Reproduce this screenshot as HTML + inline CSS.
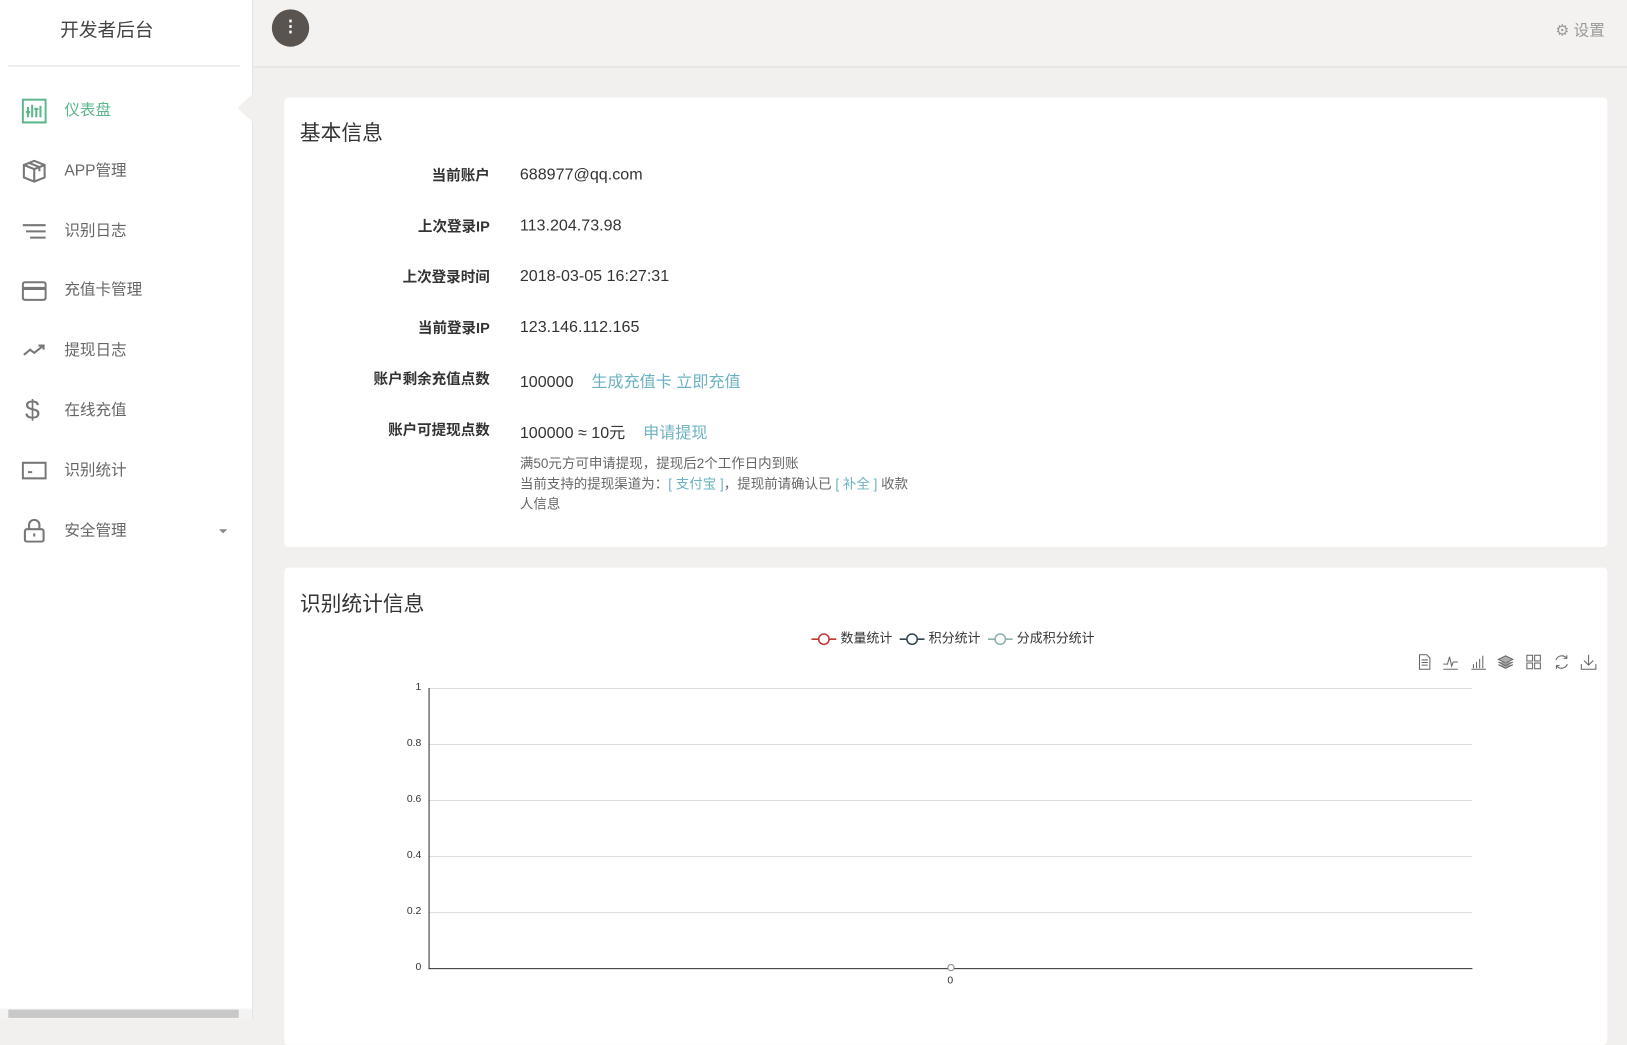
<!DOCTYPE html>
<html><head><meta charset="utf-8">
<style>
html,body{margin:0;padding:0;width:1627px;height:1019px;overflow:hidden;background:#f1f0ee;}
#w{position:absolute;left:0;top:0;width:1568px;height:982px;transform:scale(1.03763);transform-origin:0 0;font-family:"Liberation Sans","Noto Sans CJK SC",sans-serif;color:#333;}
.a{position:absolute;}
#side{left:0;top:0;width:243px;height:982px;background:#fff;border-right:1px solid #e2e0dd;}
.mi{position:absolute;left:62px;font-size:15px;color:#666;line-height:20px;}
.ic{position:absolute;left:21px;width:24px;height:24px;}
.card{background:#fff;border-radius:4px;}
.lb{position:absolute;right:1096px;font-weight:bold;font-size:14px;color:#333;text-align:right;white-space:nowrap;}
.v{position:absolute;left:501px;font-size:15.5px;color:#333;white-space:nowrap;}
.lk{color:#6cb2c2;}
.note{font-size:13px;color:#666;}
.yl{position:absolute;font-size:10px;color:#333;text-align:right;width:30px;left:376px;}
.gl{position:absolute;left:413px;width:1006px;height:1px;background:#ddd;}
.tb{position:absolute;top:630px;width:16px;height:16px;}
.lg{display:inline-block;vertical-align:middle;margin-right:4px}
</style></head><body><div id="w">
<div class="a" style="left:0;top:0;width:1568px;height:64px;background:#f3f2f0;border-bottom:1px solid #dcdad7"></div>
<div class="a" id="side">
 <div class="a" style="left:0;width:206px;top:15px;text-align:center;font-size:18px;color:#444">开发者后台</div>
 <div class="a" style="left:8px;top:63px;width:223px;height:1px;background:#ddd"></div>
 <svg class="ic" style="top:95px" viewBox="0 0 24 24"><rect x="1" y="1" width="22" height="22" fill="none" stroke="#5cb88a" stroke-width="2"/><path d="M6 18V8M10 18V6M14 18V10M18 18V7M4 13h4M12 10h4" stroke="#5cb88a" stroke-width="2" fill="none"/></svg>
 <div class="mi" style="top:97px;color:#5cb88a">仪表盘</div>
 <svg class="ic" style="top:153px" viewBox="0 0 24 24" fill="none" stroke="#777" stroke-width="2"><path d="M2 6l10-4 10 4v12l-10 4-10-4z M2 6l10 4 10-4 M12 10v12 M7 4l10 4v4"/></svg>
 <div class="mi" style="top:155px">APP管理</div>
 <svg class="ic" style="top:211px" viewBox="0 0 24 24" stroke="#777" stroke-width="2"><path d="M1 6h22M4 12h19M8 18h15"/></svg>
 <div class="mi" style="top:213px">识别日志</div>
 <svg class="ic" style="top:269px" viewBox="0 0 24 24" fill="none" stroke="#777" stroke-width="2"><rect x="1" y="3" width="22" height="17" rx="2"/><path d="M1 9h22" stroke-width="3"/></svg>
 <div class="mi" style="top:270px">充值卡管理</div>
 <svg class="ic" style="top:326px" viewBox="0 0 24 24" fill="none" stroke="#777" stroke-width="2"><path d="M2 16l6-5 4 3 9-7M16 7h5v4"/></svg>
 <div class="mi" style="top:328px">提现日志</div>
 <div class="a" style="left:24px;top:380px;font-size:26px;color:#777">$</div>
 <div class="mi" style="top:386px">在线充值</div>
 <svg class="ic" style="top:442px" viewBox="0 0 24 24" fill="none" stroke="#777" stroke-width="2"><rect x="1" y="4" width="22" height="15"/><path d="M6 13h4"/></svg>
 <div class="mi" style="top:444px">识别统计</div>
 <svg class="ic" style="top:499px" viewBox="0 0 24 24" fill="none" stroke="#777" stroke-width="2"><rect x="3" y="11" width="18" height="12" rx="2"/><path d="M7 11V7a5 5 0 0 1 10 0v4M12 15v3"/></svg>
 <div class="mi" style="top:502px">安全管理</div>
 <div class="a" style="left:211px;top:510px;border:4px solid transparent;border-top:4px solid #888;border-bottom:0"></div>
 <div class="a" style="left:0;top:972px;width:243px;height:10px;background:#f3f3f3"></div>
 <div class="a" style="left:8px;top:973px;width:222px;height:8px;background:#c8c8c8"></div>
</div>
<div class="a" style="left:229px;top:90px;width:0;height:0;border-top:14px solid transparent;border-bottom:14px solid transparent;border-right:15px solid #f1f0ee"></div>
<div class="a" style="left:262px;top:9px;width:36px;height:36px;border-radius:50%;background:#5a5450;color:#fff;text-align:center;font-size:16px;line-height:36px;font-weight:bold">⋮</div>
<div class="a" style="left:1499px;top:18px;font-size:15px;color:#999">⚙ 设置</div>

<div class="a card" style="left:274px;top:94px;width:1275px;height:433px"></div>
<div class="a" style="left:289px;top:112px;font-size:20px;color:#333">基本信息</div>
<div class="lb" style="top:159px">当前账户</div><div class="v" style="top:160px">688977@qq.com</div>
<div class="lb" style="top:208px">上次登录IP</div><div class="v" style="top:209px">113.204.73.98</div>
<div class="lb" style="top:257px">上次登录时间</div><div class="v" style="top:258px">2018-03-05 16:27:31</div>
<div class="lb" style="top:306px">当前登录IP</div><div class="v" style="top:307px">123.146.112.165</div>
<div class="lb" style="top:355px">账户剩余充值点数</div><div class="v" style="top:356px">100000 &nbsp;&nbsp;&nbsp;<span class="lk">生成充值卡 立即充值</span></div>
<div class="lb" style="top:404px">账户可提现点数</div><div class="v" style="top:405px">100000 ≈ 10元 &nbsp;&nbsp;&nbsp;<span class="lk">申请提现</span></div>
<div class="a note" style="left:501px;top:437px;width:400px;line-height:19.5px">满50元方可申请提现，提现后2个工作日内到账<br>当前支持的提现渠道为：<span class="lk">[ 支付宝 ]</span>，提现前请确认已 <span class="lk">[ 补全 ]</span> 收款<br>人信息</div>

<div class="a card" style="left:274px;top:547px;width:1275px;height:460px"></div>
<div class="a" style="left:289px;top:566px;font-size:20px;color:#333">识别统计信息</div>
<div class="a" style="left:782px;top:607px;font-size:12.5px;color:#333;white-space:nowrap;line-height:16px">
<svg class="lg" width="24" height="14"><path d="M0 7h24" stroke="#c23531" stroke-width="1.5"/><circle cx="12" cy="7" r="5" fill="#fff" stroke="#c23531" stroke-width="1.5"/></svg>数量统计 &nbsp;<svg class="lg" width="24" height="14"><path d="M0 7h24" stroke="#2f4554" stroke-width="1.5"/><circle cx="12" cy="7" r="5" fill="#fff" stroke="#2f4554" stroke-width="1.5"/></svg>积分统计 &nbsp;<svg class="lg" width="24" height="14"><path d="M0 7h24" stroke="#8fb0b0" stroke-width="1.5"/><circle cx="12" cy="7" r="5" fill="#fff" stroke="#8fb0b0" stroke-width="1.5"/></svg>分成积分统计</div>
<g></g>
<svg class="tb" style="left:1365px" viewBox="0 0 16 16" fill="none" stroke="#666"><path d="M3 1h7l3 3v11H3z M5 6h6M5 8.5h6M5 11h6"/></svg>
<svg class="tb" style="left:1390px" viewBox="0 0 16 16" fill="none" stroke="#666"><path d="M1 10h4l2-7 2 9 1.5-4H15M1 15h14"/></svg>
<svg class="tb" style="left:1417px" viewBox="0 0 16 16" fill="none" stroke="#666"><path d="M1 15h14M3 14V10M6 14V8M9 14V5M12 14V2"/></svg>
<svg class="tb" style="left:1443px" viewBox="0 0 16 16" fill="#777" stroke="#666"><path d="M8 2l7 3.5-7 3.5-7-3.5z M1 8l7 3.5 7-3.5 M1 10.5l7 3.5 7-3.5" fill-opacity=".6"/></svg>
<svg class="tb" style="left:1470px" viewBox="0 0 16 16" fill="none" stroke="#666"><rect x="1.5" y="1.5" width="5.5" height="5.5"/><rect x="9" y="1.5" width="5.5" height="5.5"/><rect x="1.5" y="9" width="5.5" height="5.5"/><rect x="9" y="9" width="5.5" height="5.5"/></svg>
<svg class="tb" style="left:1497px" viewBox="0 0 16 16" fill="none" stroke="#666"><path d="M2.5 6A6 6 0 0 1 13 4.5M13.5 10A6 6 0 0 1 3 11.5M13 1.5v3h-3M3 14.5v-3h3"/></svg>
<svg class="tb" style="left:1523px" viewBox="0 0 16 16" fill="none" stroke="#666"><path d="M8 1v10M3.5 6.5L8 11l4.5-4.5M1 10v5h14v-5"/></svg>
<div class="gl" style="top:663px"></div><div class="gl" style="top:717px"></div><div class="gl" style="top:771px"></div><div class="gl" style="top:825px"></div><div class="gl" style="top:879px"></div>
<div class="gl" style="top:933px;background:#333"></div>
<div class="a" style="left:413px;top:663px;width:1px;height:271px;background:#333"></div>
<div class="yl" style="top:657px">1</div><div class="yl" style="top:711px">0.8</div><div class="yl" style="top:765px">0.6</div><div class="yl" style="top:819px">0.4</div><div class="yl" style="top:873px">0.2</div><div class="yl" style="top:927px">0</div>
<div class="a" style="left:913px;top:929px;width:5px;height:5px;border:1px solid #888;border-radius:50%;background:#fff"></div>
<div class="a" style="left:913px;top:940px;font-size:10px">0</div>
</div></body></html>
